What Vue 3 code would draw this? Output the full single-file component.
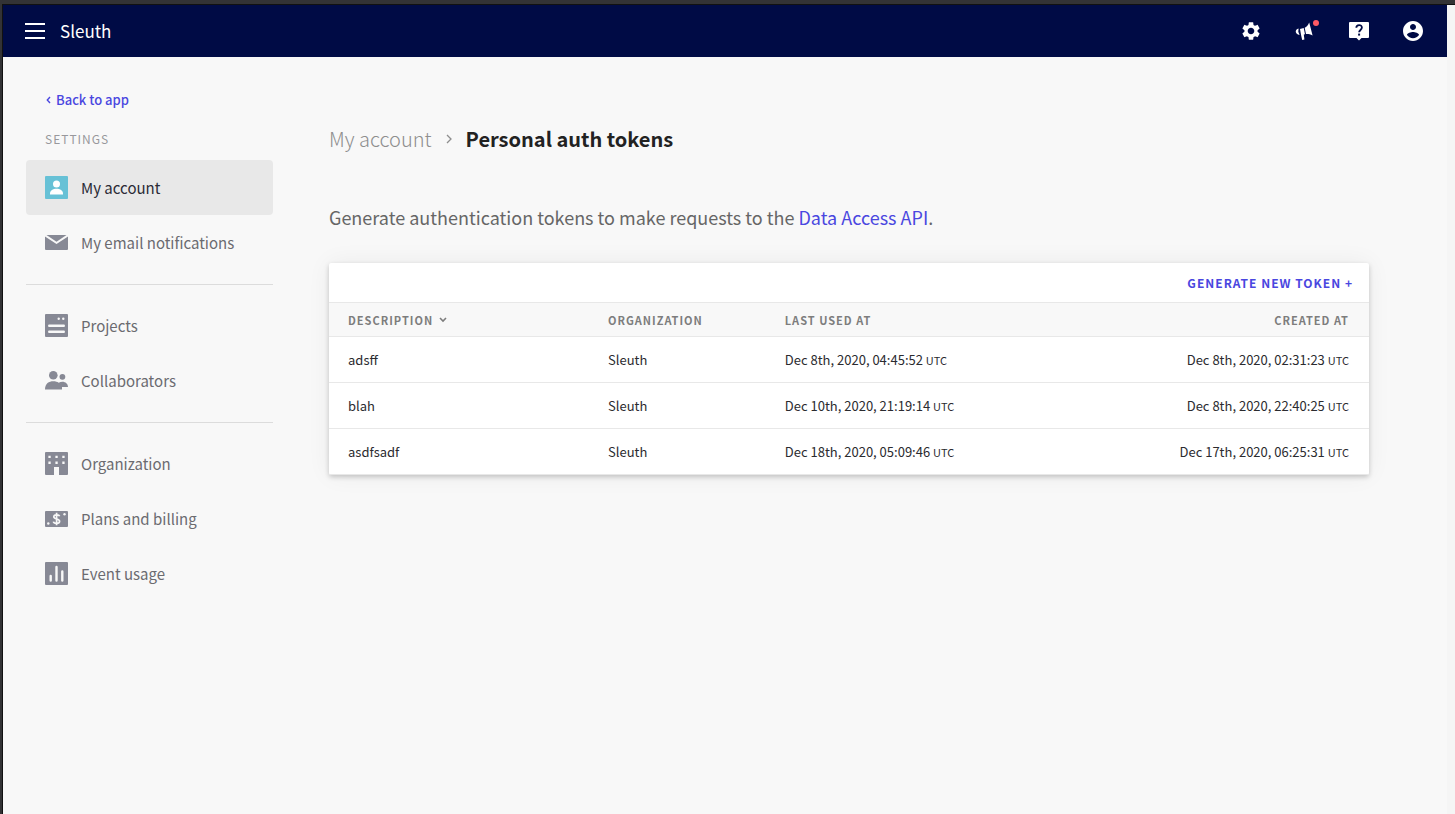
<script setup>
const groups = [
  [
    { id: 'account', label: 'My account', active: true },
    { id: 'email', label: 'My email notifications' },
  ],
  [
    { id: 'projects', label: 'Projects' },
    { id: 'people', label: 'Collaborators' },
  ],
  [
    { id: 'org', label: 'Organization' },
    { id: 'billing', label: 'Plans and billing' },
    { id: 'usage', label: 'Event usage' },
  ],
]

const tokens = [
  { name: 'adsff', org: 'Sleuth', used: 'Dec 8th, 2020, 04:45:52', created: 'Dec 8th, 2020, 02:31:23' },
  { name: 'blah', org: 'Sleuth', used: 'Dec 10th, 2020, 21:19:14', created: 'Dec 8th, 2020, 22:40:25' },
  { name: 'asdfsadf', org: 'Sleuth', used: 'Dec 18th, 2020, 05:09:46', created: 'Dec 17th, 2020, 06:25:31' },
]
</script>

<template>
  <div class="window">
    <div class="page">
      <header class="topbar">
        <button class="icon-button" type="button" aria-label="Menu">
          <svg width="20" height="16" viewBox="0 0 20 16" fill="#fff"><path d="M0 0h20v2H0zM0 7h20v2H0zM0 14h20v2H0z" /></svg>
        </button>
        <a class="brand" href="#">Sleuth</a>
        <nav class="actions" aria-label="Tools">
          <button class="icon-button" type="button" aria-label="Settings">
            <svg width="22" height="22" viewBox="0 0 24 24" fill="#fff"><path d="M19.14 12.94c.04-.3.06-.61.06-.94 0-.32-.02-.64-.07-.94l2.03-1.58c.18-.14.23-.41.12-.61l-1.92-3.32c-.12-.22-.37-.29-.59-.22l-2.39.96c-.5-.38-1.03-.7-1.62-.94l-.36-2.54c-.04-.24-.24-.41-.48-.41h-3.84c-.24 0-.43.17-.47.41l-.36 2.54c-.59.24-1.13.57-1.62.94l-2.39-.96c-.22-.08-.47 0-.59.22L2.74 8.87c-.12.21-.08.47.12.61l2.03 1.58c-.05.3-.09.63-.09.94s.02.64.07.94l-2.03 1.58c-.18.14-.23.41-.12.61l1.92 3.32c.12.22.37.29.59.22l2.39-.96c.5.38 1.03.7 1.62.94l.36 2.54c.05.24.24.41.48.41h3.84c.24 0 .44-.17.47-.41l.36-2.54c.59-.24 1.13-.56 1.62-.94l2.39.96c.22.08.47 0 .59-.22l1.92-3.32c.12-.22.07-.47-.12-.61l-2.01-1.58zM12 15.6c-1.98 0-3.6-1.62-3.6-3.6s1.62-3.6 3.6-3.6 3.6 1.62 3.6 3.6-1.62 3.6-3.6 3.6z" /></svg>
          </button>
          <button class="icon-button" type="button" aria-label="Announcements">
            <svg width="22" height="22" viewBox="0 0 22 22" fill="#fff"><path d="M15.2 2.6 18.6 15.6C16 14.2 13.8 13.9 12 14.1L10.7 7.8C12.4 7 14 5.600 15.200 2.600zM6 8.900 9.700 8 11 14.200 9.800 14.400 10.400 19.600 8.200 20 7 14.700zM4.600 8.600C.6 9 .7 14.800 5.600 14.900L4.300 11.800z" /></svg>
            <span class="dot"></span>
          </button>
          <button class="icon-button" type="button" aria-label="Help">
            <svg width="22" height="22" viewBox="0 0 22 22"><path d="M2 2h18q1 0 1 1v14q0 1-1 1h-6.500L11 20.500 8.500 18H2q-1 0-1-1V3q0-1 1-1z" fill="#fff" /><path d="M8.300 7.800C8.400 4.100 13.900 4.200 13.900 7.600 13.900 9.900 11.100 10 11.100 12.300" fill="none" stroke="#000b45" stroke-width="1.800" /><path d="M10.100 13.600h2v2h-2z" fill="#000b45" /></svg>
          </button>
          <button class="icon-button" type="button" aria-label="Profile">
            <svg width="24" height="24" viewBox="0 0 24 24" fill="#fff"><path d="M12 2C6.480 2 2 6.480 2 12s4.480 10 10 10 10-4.480 10-10S17.520 2 12 2zm0 3c1.660 0 3 1.340 3 3s-1.340 3-3 3-3-1.340-3-3 1.340-3 3-3zm0 14.200c-2.500 0-4.710-1.280-6-3.220.03-1.990 4-3.080 6-3.080 1.990 0 5.970 1.090 6 3.080-1.290 1.940-3.500 3.220-6 3.220z" /></svg>
          </button>
        </nav>
      </header>

      <div class="body">
        <aside class="sidebar">
          <a class="back" href="#">
            <svg width="5" height="8" viewBox="0 0 5 8" fill="none" stroke="currentColor" stroke-width="1.400"><path d="M4 1 1.300 4 4 7" /></svg>
            Back to app
          </a>
          <h2 class="caption">SETTINGS</h2>
          <ul v-for="(group, i) in groups" :key="i" class="group">
            <li v-for="item in group" :key="item.id">
              <a href="#" class="item" :class="{ active: item.active }">
                <svg class="item-icon" width="23" height="23" viewBox="0 0 23 23" aria-hidden="true">
                  <template v-if="item.id === 'account'">
                    <rect width="23" height="23" rx="1" fill="#67c1d6" />
                    <g fill="#fff"><circle cx="11.500" cy="8" r="3.500" /><path d="M5 18.500v-1C5 14.500 8 12.800 11.500 12.800S18 14.500 18 17.500v1z" /></g>
                  </template>
                  <template v-else-if="item.id === 'email'">
                    <path d="M0 5.500 11.500 13 23 5.500V18q0 1-1 1H1q-1 0-1-1zM1.500 4h20L11.500 10.700z" />
                  </template>
                  <template v-else-if="item.id === 'projects'">
                    <rect width="23" height="23" rx="1" />
                    <g fill="#f8f8f8"><circle cx="13.700" cy="4.800" r="1.200" /><circle cx="18.300" cy="4.800" r="1.200" /><rect x="3" y="10.500" width="17" height="2.400" rx="1.200" /><rect x="3" y="16.500" width="17" height="2.400" rx="1.200" /></g>
                  </template>
                  <template v-else-if="item.id === 'people'">
                    <circle cx="8.300" cy="6.200" r="4.300" /><circle cx="17.400" cy="7.800" r="2.900" />
                    <path d="M0 20.500C0 14.500 4 12.300 8.300 12.300 10.500 12.300 12.300 12.800 13.700 13.800 18 11.200 23 13.500 23 18H17v2.500z" />
                  </template>
                  <template v-else-if="item.id === 'org'">
                    <path d="M1 0h21q1 0 1 1v21q0 1-1 1h-8v-8H9v8H1q-1 0-1-1V1q0-1 1-1z" />
                    <path fill="#f8f8f8" d="M3.400 3.800h2.300v2.300H3.400zM10.400 3.800h2.300v2.300h-2.300zM17.300 3.800h2.300v2.300h-2.300zM3.400 9.600h2.300v2.300H3.400zM10.400 9.600h2.300v2.300h-2.300zM17.300 9.600h2.300v2.300h-2.300z" />
                  </template>
                  <template v-else-if="item.id === 'billing'">
                    <rect y="4" width="23" height="16" rx="1" />
                    <path d="M14.600 9.200C14 7.200 8.800 7.300 8.800 9.800 8.800 12.700 14.600 11.200 14.600 14.200 14.600 17 8.800 16.800 8.400 14.700M11.600 5.800V18.200" fill="none" stroke="#f8f8f8" stroke-width="1.700" />
                    <g fill="#f8f8f8"><circle cx="19.500" cy="7.200" r="1.200" /><circle cx="3.300" cy="16.500" r="1.200" /></g>
                  </template>
                  <template v-else>
                    <rect width="23" height="23" rx="1" />
                    <path d="M5.700 14v4.500M11.500 5v13.500M17.300 9.500v9" fill="none" stroke="#f8f8f8" stroke-width="2.400" stroke-linecap="round" />
                  </template>
                </svg>
                {{ item.label }}
              </a>
            </li>
          </ul>
        </aside>

        <main class="main">
          <nav class="crumbs" aria-label="Breadcrumb">
            <a href="#">My account</a>
            <svg width="6" height="10" viewBox="0 0 6 10" fill="none" stroke="#8e8e8e" stroke-width="1.300"><path d="M1 1l4 4-4 4" /></svg>
            <h1>Personal auth tokens</h1>
          </nav>
          <p class="intro">Generate authentication tokens to make requests to the <a href="#">Data Access API</a>.</p>

          <section class="card">
            <div class="card-bar">
              <button type="button" class="generate">GENERATE NEW TOKEN +</button>
            </div>
            <table>
              <thead>
                <tr>
                  <th class="c-name">
                    <span class="sort">DESCRIPTION
                      <svg width="8" height="6" viewBox="0 0 8 6" fill="none" stroke="currentColor" stroke-width="1.600"><path d="M1 1l3 3 3-3" /></svg>
                    </span>
                  </th>
                  <th class="c-org">ORGANIZATION</th>
                  <th>LAST USED AT</th>
                  <th class="right">CREATED AT</th>
                </tr>
              </thead>
              <tbody>
                <tr v-for="t in tokens" :key="t.name">
                  <td>{{ t.name }}</td>
                  <td>{{ t.org }}</td>
                  <td>{{ t.used }} <small>UTC</small></td>
                  <td class="right">{{ t.created }} <small>UTC</small></td>
                </tr>
              </tbody>
            </table>
          </section>
        </main>
      </div>
    </div>
  </div>
</template>

<style>
body {
  background: #f8f8f8;
}
</style>

<style scoped>
.window {
  box-sizing: border-box;
  min-height: 100vh;
  display: flex;
  padding-right: 8px;
  border-top: 4px solid #333335;
  border-left: 2px solid #333335;
  background: #f5f5f5;
  box-shadow: inset 1px 1px 0 #111;
  font-family: "Noto Sans CJK SC", "Noto Sans", sans-serif;
  color: #2b2b2f;
}
.page {
  flex: 1;
  margin: 1px 0 0 1px;
  background: #f8f8f8;
}
a {
  color: #4a47e0;
  text-decoration: none;
}
button {
  border: 0;
  padding: 0;
  background: none;
  font-family: inherit;
  cursor: pointer;
}
svg {
  display: block;
  flex: none;
}
.topbar {
  display: flex;
  align-items: center;
  height: 52px;
  padding: 0 22px;
  background: #000b45;
}
.brand {
  margin-left: 15px;
  font-size: 17px;
  line-height: 24px;
  color: #fff;
}
.actions {
  display: flex;
  align-items: center;
  gap: 30px;
  margin-left: auto;
}
.icon-button {
  position: relative;
  display: grid;
  place-items: center;
}
.actions .icon-button {
  width: 24px;
  height: 24px;
}
.dot {
  position: absolute;
  top: 1px;
  right: -2px;
  width: 6px;
  height: 6px;
  border-radius: 50%;
  background: #ff5a64;
}
.body {
  display: flex;
}
.sidebar {
  flex: none;
  width: 247px;
  padding: 28px 0 40px 23px;
}
.back {
  display: inline-flex;
  align-items: center;
  gap: 5px;
  margin-left: 20px;
  font-size: 13px;
  font-weight: 500;
  line-height: 20px;
}
.caption {
  margin: 20px 0 12px 19px;
  font-size: 12px;
  font-weight: 400;
  line-height: 18px;
  letter-spacing: 1px;
  color: #98989c;
}
.group {
  margin: 0;
  padding: 0;
  list-style: none;
}
.group + .group {
  margin-top: 14px;
  padding-top: 13px;
  border-top: 1px solid #dcdcdc;
}
.item {
  display: flex;
  align-items: center;
  gap: 13px;
  height: 55px;
  padding-left: 19px;
  border-radius: 4px;
  font-size: 15px;
  color: #6b6b70;
}
.item.active {
  background: #e8e8e8;
  color: #2b2b36;
}
.item-icon {
  fill: #878995;
}
.main {
  flex: 1;
  padding: 68px 78px 40px 56px;
}
.crumbs {
  display: flex;
  align-items: center;
  gap: 14px;
  font-size: 20px;
  line-height: 28px;
}
.crumbs a {
  font-weight: 300;
  color: #8e8e8e;
}
h1 {
  margin: 0;
  font-size: 20px;
  font-weight: 700;
  color: #222;
}
.intro {
  margin: 52px 0 34px;
  font-size: 18px;
  line-height: 24px;
  color: #666;
}
.card {
  border-radius: 2px;
  background: #fff;
  box-shadow: 0 2px 5px rgba(0, 0, 0, 0.2), 0 0 24px rgba(0, 0, 0, 0.06);
}
.card-bar {
  display: flex;
  align-items: center;
  justify-content: flex-end;
  height: 39px;
  padding-right: 16px;
}
.generate {
  font-size: 12px;
  font-weight: 700;
  letter-spacing: 1px;
  line-height: 18px;
  color: #4a47e0;
}
table {
  width: 100%;
  border-collapse: separate;
  border-spacing: 0;
}
th {
  box-sizing: border-box;
  height: 35px;
  padding: 0 0 0 19px;
  border: solid #e8e8e8;
  border-width: 1px 0;
  background: #f8f8f8;
  text-align: left;
  font-size: 11px;
  font-weight: 700;
  line-height: 16px;
  letter-spacing: 1px;
  color: #7d7d7d;
}
.c-name {
  width: 25%;
}
.c-org {
  width: 17%;
}
.sort {
  display: inline-flex;
  align-items: center;
  gap: 6px;
}
td {
  box-sizing: border-box;
  height: 46px;
  padding: 0 0 0 19px;
  border-bottom: 1px solid #e8e8e8;
  font-size: 13px;
  line-height: 18px;
}
.right {
  padding-right: 20px;
  text-align: right;
}
small {
  font-size: 11px;
}
</style>
